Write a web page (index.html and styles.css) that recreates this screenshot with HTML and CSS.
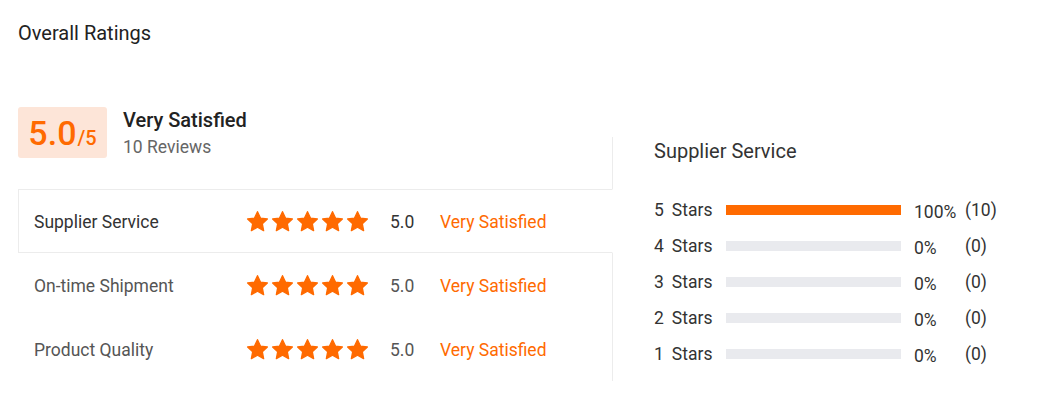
FILE: index.html
```html
<!DOCTYPE html>
<html>
<head>
<meta charset="utf-8">
<link rel="stylesheet" href="styles.css">
</head>
<body>
<svg width="0" height="0" class="defs">
  <defs>
    <symbol id="star" viewBox="0 0 24 24">
      <polygon points="12,1.8 15.1,8.4 22.3,9.3 17,14.3 18.4,21.5 12,18 5.6,21.5 7,14.3 1.7,9.3 8.9,8.4" fill="#ff6a00" stroke="#ff6a00" stroke-width="1.4" stroke-linejoin="round"/>
    </symbol>
  </defs>
</svg>
<div class="page">
  <h2 class="title">Overall Ratings</h2>
  <div class="main">
    <div class="left">
      <div class="summary">
        <div class="score"><span class="big">5.0</span><span class="small">/5</span></div>
        <div class="sum-text">
          <div class="sum-level">Very Satisfied</div>
          <div class="sum-count">10 Reviews</div>
        </div>
      </div>
      <div class="rows">
        <div class="row active">
          <div class="label">Supplier Service</div>
          <div class="stars">
            <svg class="star"><use href="#star"/></svg><svg class="star"><use href="#star"/></svg><svg class="star"><use href="#star"/></svg><svg class="star"><use href="#star"/></svg><svg class="star"><use href="#star"/></svg>
          </div>
          <div class="value">5.0</div>
          <div class="level">Very Satisfied</div>
        </div>
        <div class="row">
          <div class="label">On-time Shipment</div>
          <div class="stars">
            <svg class="star"><use href="#star"/></svg><svg class="star"><use href="#star"/></svg><svg class="star"><use href="#star"/></svg><svg class="star"><use href="#star"/></svg><svg class="star"><use href="#star"/></svg>
          </div>
          <div class="value">5.0</div>
          <div class="level">Very Satisfied</div>
        </div>
        <div class="row">
          <div class="label">Product Quality</div>
          <div class="stars">
            <svg class="star"><use href="#star"/></svg><svg class="star"><use href="#star"/></svg><svg class="star"><use href="#star"/></svg><svg class="star"><use href="#star"/></svg><svg class="star"><use href="#star"/></svg>
          </div>
          <div class="value">5.0</div>
          <div class="level">Very Satisfied</div>
        </div>
      </div>
    </div>
    <div class="right">
      <div class="right-title">Supplier Service</div>
      <div class="bars">
        <div class="bar-row">
          <div class="bar-label"><span class="num">5</span>Stars</div>
          <div class="track"><div class="fill" style="width:100%"></div></div>
          <div class="pct">100%</div>
          <div class="cnt">(10)</div>
        </div>
        <div class="bar-row">
          <div class="bar-label"><span class="num">4</span>Stars</div>
          <div class="track"><div class="fill" style="width:0%"></div></div>
          <div class="pct">0%</div>
          <div class="cnt">(0)</div>
        </div>
        <div class="bar-row">
          <div class="bar-label"><span class="num">3</span>Stars</div>
          <div class="track"><div class="fill" style="width:0%"></div></div>
          <div class="pct">0%</div>
          <div class="cnt">(0)</div>
        </div>
        <div class="bar-row">
          <div class="bar-label"><span class="num">2</span>Stars</div>
          <div class="track"><div class="fill" style="width:0%"></div></div>
          <div class="pct">0%</div>
          <div class="cnt">(0)</div>
        </div>
        <div class="bar-row">
          <div class="bar-label"><span class="num">1</span>Stars</div>
          <div class="track"><div class="fill" style="width:0%"></div></div>
          <div class="pct">0%</div>
          <div class="cnt">(0)</div>
        </div>
      </div>
    </div>
  </div>
</div>
</body>
</html>
```

FILE: styles.css
```css
html, body {
  margin: 0;
  padding: 0;
  background: #fff;
}
body {
  font-family: Roboto, "Liberation Sans", Arial, sans-serif;
  color: #333;
}
.defs {
  position: absolute;
  width: 0;
  height: 0;
}
.page {
  padding: 21px 18px 0 18px;
}
.title {
  margin: 0;
  font-size: 20px;
  font-weight: 400;
  line-height: 24px;
  color: #222;
}
.main {
  display: flex;
  margin-top: 62px;
}
.left {
  width: 594px;
  flex: none;
}
.summary {
  display: flex;
  align-items: center;
  height: 51px;
}
.score {
  width: 89px;
  height: 51px;
  box-sizing: border-box;
  background: #fde5d8;
  border-radius: 3px;
  display: flex;
  align-items: baseline;
  justify-content: center;
  padding-top: 5px;
  color: #ff6a00;
}
.score .big {
  font-size: 34px;
  line-height: 42px;
  font-weight: 500;
}
.score .small {
  font-size: 20px;
  margin-left: 1px;
  font-weight: 500;
}
.sum-text {
  margin-left: 16px;
  display: flex;
  flex-direction: column;
}
.sum-level {
  font-size: 20px;
  font-weight: 500;
  line-height: 24px;
  color: #222;
  margin-top: 0;
}
.sum-count {
  font-size: 17.5px;
  line-height: 22px;
  color: #666;
  margin-top: 4px;
}
.rows {
  margin-top: 31px;
}
.row {
  height: 64px;
  box-sizing: border-box;
  border: 1px solid transparent;
  display: flex;
  align-items: center;
  padding-left: 15px;
  color: #555;
  font-size: 17.5px;
}
.row.active {
  border-color: #ececec;
  border-right-color: #fff;
  background: #fff;
  color: #333;
  margin-right: -1px;
  position: relative;
  z-index: 1;
}
.label {
  width: 212px;
  flex: none;
  padding-top: 2px;
}
.stars {
  display: flex;
  gap: 2px;
  width: 124px;
  flex: none;
}
.star {
  width: 23px;
  height: 23px;
  display: block;
}
.value {
  margin-left: 20px;
  width: 50px;
  flex: none;
  padding-top: 2px;
}
.level {
  color: #ff6a00;
  padding-top: 2px;
}
.right {
  flex: 1;
  border-left: 1px solid #ececec;
  margin-top: 30px;
  padding-left: 41px;
}
.right-title {
  font-size: 20px;
  line-height: 24px;
  color: #333;
  margin-top: 2px;
}
.bars {
  margin-top: 36px;
  display: flex;
  flex-direction: column;
  gap: 14px;
}
.bar-row {
  display: flex;
  align-items: center;
  height: 22px;
  font-size: 17.5px;
  color: #333;
}
.bar-label {
  width: 72px;
  flex: none;
}
.bar-label .num {
  margin-right: 8px;
}
.track {
  width: 175px;
  height: 10px;
  background: #e9eaee;
  flex: none;
}
.fill {
  height: 100%;
  background: #ff6a00;
}
.pct {
  margin-left: 13px;
  width: 51px;
  flex: none;
  padding-top: 4px;
}
.cnt {
  padding-top: 0;
}
```
